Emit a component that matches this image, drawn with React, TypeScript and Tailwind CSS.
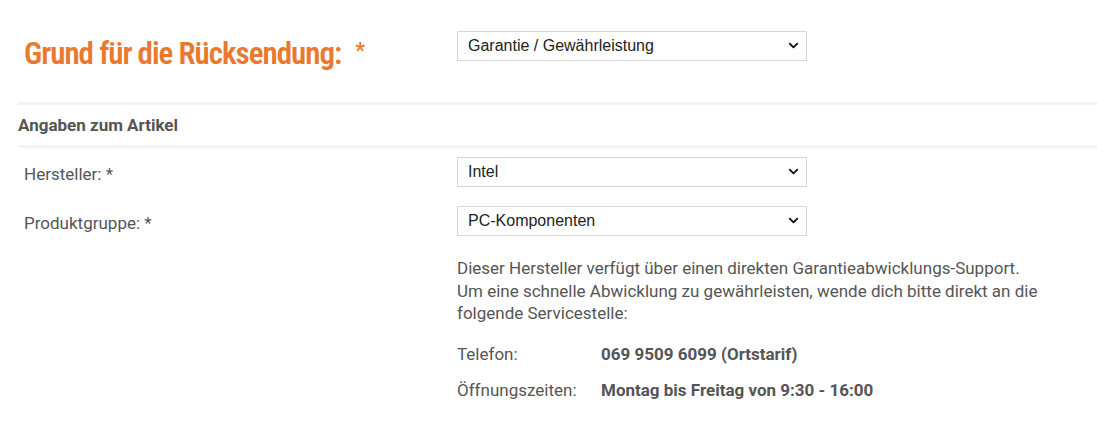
import { ChevronDown } from "lucide-react";

function Select({ value }: { value: string }) {
  return (
    <div className="relative w-[350px]">
      <select
        className="w-full h-[30px] appearance-none border border-[#d6d6d6] bg-white pl-[10px] pr-8 text-[16px] text-[#222] outline-none"
        style={{ fontFamily: '"Liberation Sans", Arial, sans-serif' }}
        defaultValue={value}
      >
        <option>{value}</option>
      </select>
      <ChevronDown
        className="pointer-events-none absolute right-[6px] top-[7px] text-[#111]"
        size={15}
        strokeWidth={3}
      />
    </div>
  );
}

export default function App() {
  return (
    <main
      className="min-h-screen bg-white text-[#555] pl-[18px]"
      style={{ fontFamily: "Roboto, sans-serif" }}
    >
      <div className="flex items-start pt-[31px] pb-[30px]">
        <h1
          className="w-[439px] pl-[6px] pt-[5px] text-[31px] font-semibold leading-[36px] text-[#e8792f] tracking-[-1px]"
          style={{
            fontFamily: '"Roboto Condensed", "Liberation Sans Narrow", "DejaVu Sans Condensed", sans-serif',
            fontStretch: "condensed",
          }}
        >
          Grund für die Rücksendung:
          <span className="ml-[14px] align-top text-[22px] leading-[30px]">*</span>
        </h1>
        <Select value="Garantie / Gewährleistung" />
      </div>

      <div className="border-t-[3px] border-b-[3px] border-[#f3f3f3] py-[10px] text-[17px] font-bold leading-[20px] text-[#555]">
        Angaben zum Artikel
      </div>

      <div className="mt-[9px] flex flex-col gap-[19px]">
        <div className="flex items-start">
          <div className="w-[439px] pl-[6px] pt-[7px] text-[17px] leading-[20px]">Hersteller: *</div>
          <Select value="Intel" />
        </div>
        <div className="flex items-start">
          <div className="w-[439px] pl-[6px] pt-[7px] text-[17px] leading-[20px]">Produktgruppe: *</div>
          <Select value="PC-Komponenten" />
        </div>
      </div>

      <div className="ml-[439px] mt-[21px] text-[17px] leading-[22.5px]">
        <p>
          Dieser Hersteller verfügt über einen direkten Garantieabwicklungs-Support.
          <br />
          Um eine schnelle Abwicklung zu gewährleisten, wende dich bitte direkt an die
          <br />
          folgende Servicestelle:
        </p>
        <div className="mt-[18px] flex flex-col gap-[14px]">
          <div className="flex">
            <span className="w-[144px]">Telefon:</span>
            <span className="font-bold">069 9509 6099 (Ortstarif)</span>
          </div>
          <div className="flex">
            <span className="w-[144px]">Öffnungszeiten:</span>
            <span className="font-bold">Montag bis Freitag von 9:30 - 16:00</span>
          </div>
        </div>
      </div>
    </main>
  );
}
